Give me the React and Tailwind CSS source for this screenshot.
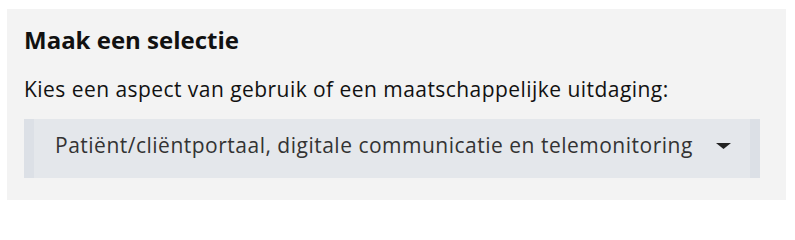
export default function App() {
  return (
    <div className="min-h-screen bg-white pl-[7px] pt-[9px]" style={{ fontFamily: '"Open Sans", sans-serif' }}>
      <div className="w-[779px] h-[191px] bg-[#f3f3f3] px-[17px] pt-[16px]">
        <h2 className="text-[24px] leading-[30px] font-bold text-[#111]">Maak een selectie</h2>
        <p className="mt-[20px] text-[21px] leading-[28px] tracking-[0.45px] text-[#111]">
          Kies een aspect van gebruik of een maatschappelijke uitdaging:
        </p>
        <div className="mt-[16px] flex h-[59px] w-[736px] items-start bg-[#e4e7eb] border-l-[10px] border-r-[10px] border-[#dce0e6] pl-[21px] pr-[19px] pt-[12px]">
          <span className="flex-1 text-[21px] leading-[28px] tracking-[0.5px] text-[#333]">
            Patiënt/cliëntportaal, digitale communicatie en telemonitoring
          </span>
          <svg width="15" height="6" viewBox="0 0 15 6" className="mt-[12px]">
            <path d="M0 0 H15 L7.5 6 Z" fill="#222" />
          </svg>
        </div>
      </div>
    </div>
  );
}
